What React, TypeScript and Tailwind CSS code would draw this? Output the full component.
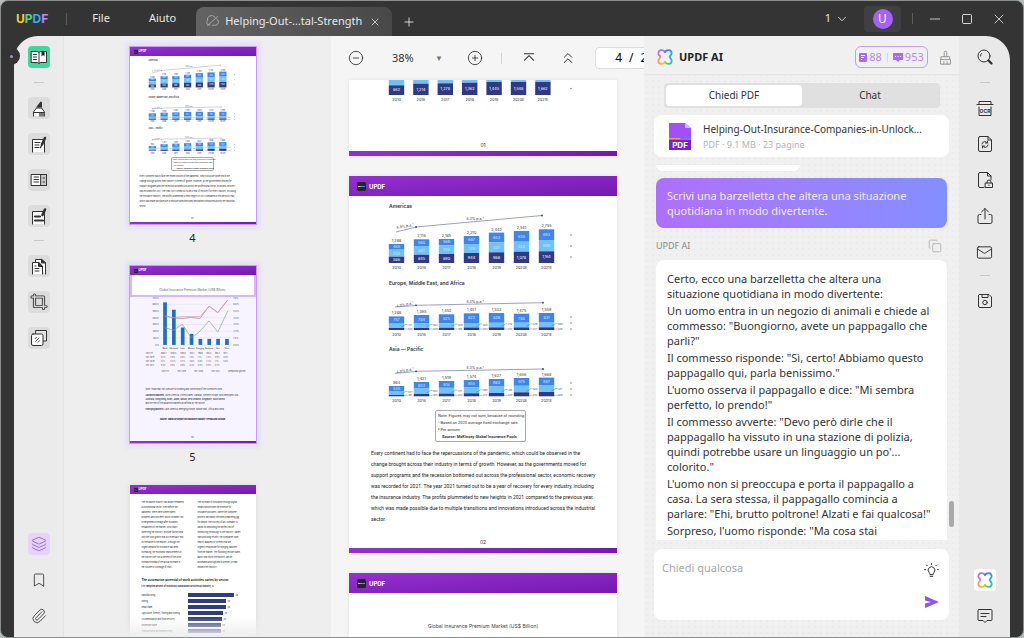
import type { ReactNode } from 'react';
import {
  Bookmark,
  ChevronDown,
  ChevronsUp,
  CircleMinus,
  CirclePlus,
  Copy,
  Layers,
  Mail,
  Minus,
  Paperclip,
  Plus,
  Square,
  X,
} from 'lucide-react';

const years = ['2010', '2016', '2017', '2018', '2019', '2020E', '2021E'];

type Bar = {
  total?: string;
  values: string[];
  heights: number[]; // blue, light, dark
  side?: string[];
};

type ChartProps = {
  height: number;
  base: number;
  step?: number;
  bars: Bar[];
  trend?: number[][];
  legend?: number[];
};

const americas: Bar[] = [
  { total: '1,288', values: ['469', '733', '586'], heights: [5.7, 7, 6.3] },
  { total: '2,116', values: ['580', '691', '845'], heights: [6.7, 8.7, 8.3] },
  { total: '2,185', values: ['569', '726', '890'], heights: [6.3, 8.7, 9] },
  { total: '2,310', values: ['607', '759', '944'], heights: [8, 9, 10] },
  { total: '2,442', values: ['653', '801', '988'], heights: [9.7, 10, 10.7] },
  { total: '2,541', values: ['635', '828', '1,078'], heights: [10.7, 10, 11.3] },
  { total: '2,755', values: ['693', '898', '1,164'], heights: [10.7, 11.3, 11.7] },
];

const europe: Bar[] = [
  { total: '1,288', values: ['757'], heights: [7.3, 4.3, 2], side: ['311', '220'] },
  { total: '1,395', values: ['784'], heights: [8.5, 4.5, 2], side: ['402', '209'] },
  { total: '1,452', values: ['825'], heights: [9, 4.4, 2.3], side: ['429', '198'] },
  { total: '1,451', values: ['822'], heights: [9.7, 4.5, 2.5], side: ['426', '203'] },
  { total: '1,533', values: ['848'], heights: [9.8, 4.6, 2.6], side: ['472', '213'] },
  { total: '1,475', values: ['780'], heights: [9, 4.7, 2.6], side: ['479', '217'] },
  { total: '1,559', values: ['831'], heights: [9.6, 4.7, 2.7], side: ['498', '229'] },
];

const asia: Bar[] = [
  { total: '984', values: ['548'], heights: [5, 4, 1.3], side: ['337', '99'] },
  { total: '1,421', values: ['853'], heights: [6.5, 5.5, 2.3], side: ['383', '185'] },
  { total: '1,519', values: ['916'], heights: [6.8, 5.8, 2.7], side: ['371', '232'] },
  { total: '1,574', values: ['955'], heights: [7.2, 6.1, 3], side: ['395', '214'] },
  { total: '1,627', values: ['980'], heights: [7.5, 6.5, 3.3], side: ['418', '229'] },
  { total: '1,656', values: ['975'], heights: [7.8, 6.5, 4], side: ['429', '254'] },
  { total: '1,668', values: ['967'], heights: [8, 6.4, 4.3], side: ['431', '269'] },
];

const world: Bar[] = ['862', '1,214', '1,278', '1,362', '1,445', '1,548', '1,662'].map((v, i) => ({
  values: ['', '', v],
  heights: [0, 12, [9.7, 11.3, 11.7, 12.3, 13, 13, 13][i]],
}));

const Chart = ({ height, base, step = 25, bars, trend, legend = [] }: ChartProps) => (
  <svg viewBox={`0 0 268 ${height}`} className="block w-full" fontFamily="Inter, sans-serif" textAnchor="middle">
    {trend && (
      <g stroke="#5b5f92" strokeWidth="0.6" fill="#2f3a86">
        <path d={`M${trend[0]}L${trend[1][0] - 1} ${trend[1][1] + 0.3}M${trend[1]}L${trend[2]}`} fill="none" />
        {trend.slice(1).map((p) => (
          <circle key={p[0]} cx={p[0]} cy={p[1]} r="0.9" stroke="none" />
        ))}
        <text x="56" y={trend[1][1] + 0.5} fontSize="3.6" stroke="none" fill="#33374f" transform={`rotate(-9 56 ${trend[1][1]})`}>
          4.3% p.a.¹
        </text>
        <text x="126" y={(trend[1][1] + trend[2][1]) / 2 - 1.5} fontSize="3.6" stroke="none" fill="#33374f">
          4.3% p.a.¹
        </text>
      </g>
    )}
    {bars.map((bar, i) => {
      const cx = 47.5 + i * step;
      const [blue, light, dark] = bar.heights;
      const top = base - blue - light - dark;
      return (
        <g key={i} fontSize="3.8">
          <rect x={cx - 7.7} y={top} width="15.4" height={blue} fill="#3f86ec" />
          <rect x={cx - 7.7} y={top + blue} width="15.4" height={light} fill="#6fc1f8" />
          <rect x={cx - 7.7} y={base - dark} width="15.4" height={dark} fill="#303a84" />
          <text x={cx} y={top - 2} fill="#333">{bar.total}</text>
          <text x={cx} y={top + blue / 2 + 1.3} fill="#dbe9ff">{bar.values[0]}</text>
          <text x={cx} y={base - dark - light / 2 + 1.3} fill="#c9e8ff">{bar.values[1]}</text>
          <text x={cx} y={base - dark / 2 + 1.3} fill="#fff">{bar.values[2]}</text>
          <text x={cx} y={base + 5.8} fill="#333">{years[i]}</text>
          {bar.side && (
            <g fontSize="2.6" fill="#555">
              <path d={`M${cx + 5} ${base - dark - 1}l4-2.5h2M${cx + 7.7} ${base - 1}h3.4`} stroke="#555" strokeWidth="0.4" fill="none" />
              <text x={cx + 13.6} y={base - dark - 2}>{bar.side[0]}</text>
              <text x={cx + 13.6} y={base}>{bar.side[1]}</text>
            </g>
          )}
        </g>
      );
    })}
    {legend.map((y) => (
      <circle key={y} cx="222" cy={y} r="0.8" fill="#777c96" />
    ))}
  </svg>
);

const paragraph = [
  'Every continent had to face the repercussions of the pandemic, which could be observed in the',
  'change brought across their industry in terms of growth. However, as the governments moved for',
  'support programs and the recession bottomed out across the professional sector, economic recovery',
  'was recorded for 2021. The year 2021 turned out to be a year of recovery for every industry, including',
  'the insurance industry. The profits plummeted to new heights in 2021 compared to the previous year,',
  'which was made possible due to multiple transitions and innovations introduced across the industrial',
  'sector.',
];

const PageHeader = ({ small }: { small?: boolean }) => (
  <div
    className={`flex shrink-0 items-center bg-linear-to-br from-[#9430d0] to-[#7719b0] font-bold text-white ${
      small ? 'h-[9px] gap-px px-1 text-[3px]' : 'h-5 gap-[3px] px-2 text-[6px]'
    }`}
  >
    <svg viewBox="0 0 9 9" className={small ? 'size-[4px]' : 'size-[9px]'}>
      <rect width="9" height="9" rx="1.5" fill="#26242b" />
      <path d="M1 4.5h2" stroke="#f3c623" />
      <path d="M3 4.5h2" stroke="#38c98b" />
      <path d="M5 4.5h3" stroke="#4a8cf5" />
    </svg>
    UPDF
  </div>
);

const PageFooter = ({ small, number }: { small?: boolean; number: string }) => (
  <div className="mt-auto shrink-0">
    <div className={`text-center text-[#333] ${small ? 'pb-[2px] text-[2px] leading-[3px]' : 'pb-[2px] text-[5px] leading-[8px]'}`}>
      {number}
    </div>
    <div className={`bg-linear-to-r from-[#9430d0] to-[#7719b0] ${small ? 'h-[2px]' : 'h-[5px]'}`} />
  </div>
);

const RegionPage = ({ small }: { small?: boolean }) => {
  const heading = `font-semibold text-[#333] ${small ? 'h-[6px] pl-[19px] text-[2px] leading-[6px]' : 'h-3 pl-[40px] text-[5px] leading-[14px]'}`;
  return (
    <div className="flex h-full flex-col bg-white font-[Inter,sans-serif]">
      <PageHeader small={small} />
      <h3 className={`${heading} ${small ? 'mt-px' : 'mt-[3px]'}`}>Americas</h3>
      <Chart height={65} base={52} bars={americas} trend={[[47, 21], [67, 16], [193, 4.5]]} legend={[24, 35, 46]} />
      <h3 className={heading}>Europe, Middle East, and Africa</h3>
      <Chart height={54} base={42} bars={europe} trend={[[46, 19], [67, 17.3], [194, 14.7]]} legend={[29, 35, 41]} />
      <h3 className={heading}>Asia — Pacific</h3>
      <Chart height={54} base={42.3} bars={asia} trend={[[46, 19.3], [67, 17.3], [194, 15]]} legend={[29, 35, 41]} />
      <div
        className={`rounded-xs border border-[#aaa] font-[Roboto,sans-serif] text-[#333] ${
          small ? 'mt-px ml-[41px] w-[43px] pl-px text-[2px] leading-[3px]' : 'mt-[2px] ml-[86px] w-[91px] py-px pl-[2px] text-[4px] leading-[7px]'
        }`}
      >
        <p className="whitespace-nowrap">Note: Figures may not sum, because of rounding.</p>
        <p className="whitespace-nowrap">¹ Based on 2020 average fixed exchange rate.</p>
        <p className="whitespace-nowrap">² Per annum.</p>
        <p className="pl-1 font-bold whitespace-nowrap">Source: McKinsey Global Insurance Pools</p>
      </div>
      <div
        className={`whitespace-nowrap text-[#222] ${
          small ? 'mt-[3px] pl-[10px] text-[2px] leading-[5px]' : 'mt-[6px] pl-[22px] font-[Roboto,sans-serif] text-[5px] leading-[11px]'
        }`}
      >
        {paragraph.map((line) => (
          <p key={line}>{line}</p>
        ))}
      </div>
      <PageFooter small={small} number="02" />
    </div>
  );
};

const marketRows = [
  ['2021 PY', '1084.1', '1010.4', '500.6', '310.2', '190.6', '180.4', '186.2', '187.1'],
  ['YoY 2019', '3.2%', '2.5%', '3.0%', '1.4%', '1.1%', '2.3%', '3.9%', '4.8%'],
  ['YoY 2020', '2.1%', '3.4%', '3.2%', '2.6%', '3.8%', '2.2%', '1.1%', '4.5%'],
  ['YoY 2021', '3.3%', '3.5%', '3.0%', '4.4%', '3.5%', '5.3%', '4.7%', ''],
];

const MarketChart = () => (
  <svg viewBox="0 0 376 160" className="block w-full" fontFamily="Inter, sans-serif" fontSize="7" fill="#555">
    {[2, 22, 42, 62, 82, 102, 122, 143].map((y, i) => (
      <g key={y}>
        <path d={`M92 ${y}H302`} stroke="#d8d5df" />
        <text x="86" y={y + 3} textAnchor="end">{700 - i * 100}.0</text>
        <text x="308" y={y + 3}>{7 - i}.0%</text>
      </g>
    ))}
    {[127, 105, 52, 33, 18, 18, 18, 18].map((h, i) => (
      <rect key={i} x={99 + i * 26.4} y={143 - h} width="11" height={h} fill="#1d6fc0" />
    ))}
    <g fill="none" strokeWidth="2">
      <path d="M104 55l26 8 26 1 27-3 26 3 27-37 26 20 30-39" stroke="#c5707f" />
      <path d="M104 59l26 2 26-2 27-1 26 0 27-30 26 18 30-37" stroke="#c3a0ab" />
      <path d="M104 92l26 7 26-18 27 41 26-20 27-31 26 34 30-64" stroke="#79ac85" />
    </g>
    <g fontSize="5" fontWeight="700" textAnchor="middle">
      {['World', 'Advanced', 'Latin', 'Western', 'Emerging', 'Southeast', 'Asia', 'China'].map((name, i) => (
        <text key={name} x={104 + i * 26.4} y="154">{name}</text>
      ))}
    </g>
  </svg>
);

const MarketThumb = () => (
  <div className="flex h-full flex-col bg-[#f7f3ff] font-[Inter,sans-serif]">
    <PageHeader small />
    <h3 className="h-[22px] border-2 border-t-0 border-[#d6b9fa] bg-white pt-[13px] text-center text-[3px] leading-[4px] text-[#666]">
      Global Insurance Premium Market (US$ Billion)
    </h3>
    <MarketChart />
    <table className="ml-[16px] w-[86px] text-[2px] leading-[4px] text-[#444]">
      <tbody>
        {marketRows.map((row) => (
          <tr key={row[0]}>
            {row.map((cell, i) => (
              <td key={i} className="whitespace-nowrap">{cell}</td>
            ))}
          </tr>
        ))}
      </tbody>
    </table>
    <div className="mt-[2px] flex justify-between pr-[10px] pl-[32px] text-[2px] leading-[4px] text-[#444]">
      <span>2021 PY</span>
      <span>YoY 2019</span>
      <span>YoY 2020</span>
      <span>YoY 2021</span>
      <span>Compound growth</span>
    </div>
    <div className="mt-[14px] flex flex-col pl-[16px] text-[2px] leading-[4px] whitespace-nowrap text-[#333]">
      <p>Note: Totals may not sum due to rounding and conversion of the currencies used.</p>
      <p className="mt-[2px]"><b>Advanced Markets:</b> North America (United States, Canada), Western Europe, and Developed Asia</p>
      <p className="font-semibold">Australia, Hong Kong, Israel, Japan, Macao, New Zealand, Singapore, South Korea</p>
      <p>and the rest of the advanced markets as defined by the source.</p>
      <p className="mt-[2px]"><b>Emerging Markets:</b> Latin America, Emerging Europe, Middle East, Africa and China</p>
    </div>
    <p className="mt-[6px] text-center text-[2px] leading-[4px] font-bold">Source: Swiss Re Report on Insurance Industry Trends and Outlook</p>
    <PageFooter small number="03" />
  </div>
);

const leftColumn = [
  'The insurance industry has always remained',
  'a conventional sector. Even before the',
  'pandemic, there were some evident',
  'problems and concerns which ultimately led',
  'to heightened leverage after economic',
  'instabilities hit the market. Structurally',
  'observing the industry, multiple factors deal',
  'with the slow growth that will eventually end',
  'its relevance in the market. Although the',
  'urgent demand for insurance has been',
  'increasing, the economic improvements in',
  'the industry are just a percent of the price',
  'increase instead of the actual increase in',
  'the volume or coverage of risks.',
];
const rightColumn = [
  'The increase of innovation through digital',
  'means has become the essence for',
  'insurance providers. Where the complete',
  'process has mainly become a marketing gig',
  'for people, the success of any company is',
  'based on depositing the perfect mix of',
  'introducing technology in the industry. Rather',
  'than providing returns, the companies have',
  'heavily adapted to systems that are',
  'urgently responsible for bringing liabilities',
  'from the market. The following section states',
  'about how much the industry can be',
  'automated and digitized in present or near',
  'modern the industry.',
];
const sectors: [string, number][] = [
  ['Manufacturing', 46],
  ['Mining', 38],
  ['Retail trade', 38],
  ['Agriculture, forestry, fishing and hunting', 35],
  ['Accommodation and food services', 34],
  ['Wholesale trade', 33],
  ['Transportation and warehousing', 33],
];

const SectorThumb = () => (
  <div className="flex h-full flex-col bg-white font-[Inter,sans-serif] text-[#222]">
    <PageHeader small />
    <div className="mt-[6px] grid grid-cols-2 gap-[6px] pr-[8px] pl-[12px] text-[2px] leading-[5px] whitespace-nowrap">
      {[leftColumn, rightColumn].map((column, i) => (
        <div key={i}>
          {column.map((line) => (
            <p key={line}>{line}</p>
          ))}
        </div>
      ))}
    </div>
    <div className="mt-[7px] pl-[12px] text-[3px] leading-[6px] font-bold whitespace-nowrap">
      <p>The automation potential of work activities varies by sector.</p>
      <p className="text-[2px]">FTE-weighted percent of technically automatable activities by industry, %</p>
    </div>
    <div className="mt-[3px] pl-[12px] text-[2px] leading-[6px]">
      {sectors.map(([name, value]) => (
        <div key={name} className="flex items-center gap-[2px] whitespace-nowrap">
          <span className="w-[44px]">{name}</span>
          <span className="h-[4px] bg-[#2f3c7e]" style={{ width: value }} />
          <span>{value}</span>
        </div>
      ))}
    </div>
  </div>
);

const Thumb = ({ label, children, active }: { label?: string; children: ReactNode; active?: boolean }) => (
  <button className="block w-[126px] shrink-0 text-left">
    <div
      className={`h-[177px] overflow-hidden ${
        active ? 'shadow-[0_0_0_1px_#c79df3,0_0_4px_5px_#e7e0f8]' : 'shadow-[0_0_6px_#d9d9d9]'
      }`}
    >
      {children}
    </div>
    {label && <div className="mt-[5px] h-[37px] text-center text-[11px] leading-[17px] text-[#222]">{label}</div>}
  </button>
);

const Clover = ({ className = '' }: { className?: string }) => (
  <svg viewBox="0 0 24 24" className={className} fill="none" strokeWidth="2.6" strokeLinecap="round">
    <defs>
      <linearGradient id="cl-a" x1="0" y1="1" x2="1" y2="0"><stop stopColor="#e05cf5" /><stop offset="1" stopColor="#7b8dff" /></linearGradient>
      <linearGradient id="cl-b" x1="0" y1="0" x2="1" y2="1"><stop stopColor="#3f7dfb" /><stop offset="1" stopColor="#23aee8" /></linearGradient>
      <linearGradient id="cl-c" x1="1" y1="0" x2="0" y2="1"><stop stopColor="#16b7d0" /><stop offset="1" stopColor="#3fd97b" /></linearGradient>
      <linearGradient id="cl-d" x1="0" y1="0" x2="1" y2="1"><stop stopColor="#ff8d6f" /><stop offset="1" stopColor="#ffc412" /></linearGradient>
    </defs>
    <path d="M12 4.500C10 .5 2 0 2 6.500c0 3.500 3 3 3 5.500" stroke="url(#cl-a)" />
    <path d="M12 4.500C14 .5 22 0 22 6.500c0 3.500-3 3-3 5.500" stroke="url(#cl-b)" />
    <path d="M12 19.500c2 4 10 4.500 10-2 0-3.500-3-3-3-5.500" stroke="url(#cl-c)" />
    <path d="M12 19.500c-2 4-10 4.500-10-2 0-3.500 3-3 3-5.500" stroke="url(#cl-d)" />
  </svg>
);

const Drawing = ({ children, className = 'size-[18px]' }: { children: ReactNode; className?: string }) => (
  <svg viewBox="0 0 18 18" className={className} fill="none" stroke="#333" strokeWidth="1" strokeLinejoin="round" strokeLinecap="round">
    {children}
  </svg>
);

const Tool = ({ label, children, tone = 'bg-[#dcdcdc]' }: { label: string; children: ReactNode; tone?: string }) => (
  <button aria-label={label} className={`flex size-[22px] shrink-0 items-center justify-center rounded-sm ${tone}`}>
    {children}
  </button>
);

const Rule = () => <div className="h-px w-[10px] shrink-0 bg-[#c8c8c8]" />;

const TitleBar = () => (
  <header className="flex h-[35px] shrink-0 items-center text-[11px] text-[#e8e8e8]">
    <div className="ml-[15px] font-[Inter,sans-serif] text-[12px] font-bold">
      <span className="text-[#ffcf1f]">U</span>
      <span className="text-[#4fd67c]">P</span>
      <span className="text-[#3fa4f5]">D</span>
      <span className="text-[#c486f2]">F</span>
    </div>
    <div className="ml-[18px] h-[12px] w-px bg-[#5d5d5d]" />
    <button className="ml-[25px]">File</button>
    <button className="ml-[39px]">Aiuto</button>
    <div className="ml-[20px] flex h-[29px] w-[196px] items-center self-end rounded-t-lg bg-linear-to-r from-[#636363] to-[#484848] pl-[9px]">
      <Drawing className="size-[15px]">
        <path d="M3 14 15 3M6 13H4a3 3 0 0 1-1-5 5 5 0 0 1 9-4M14 6a4 4 0 0 1-1 7.500H9" stroke="#b5b5b5" />
      </Drawing>
      <span className="ml-[5px] flex-1 text-[11px] whitespace-nowrap">Helping-Out-...tal-Strength</span>
      <button aria-label="Chiudi scheda" className="mr-[11px]"><X size={12} strokeWidth={1.500} /></button>
    </div>
    <button aria-label="Nuova scheda" className="mt-[6px] ml-[10px]"><Plus size={14} strokeWidth={1.500} /></button>
    <button className="ml-auto flex items-center gap-1 text-[11px]">1 <ChevronDown size={14} strokeWidth={1.500} /></button>
    <button aria-label="Account" className="ml-[15px] flex h-[26px] w-[37px] items-center justify-center rounded-sm bg-[#403f42]">
      <span className="flex size-5 items-center justify-center rounded-full bg-[#a462f8] text-[12px] text-white">U</span>
    </button>
    <div className="ml-[11px] h-[11px] w-px bg-[#5d5d5d]" />
    <button aria-label="Riduci" className="ml-[14px]"><Minus size={16} strokeWidth={1.200} /></button>
    <button aria-label="Ingrandisci" className="ml-[18px]"><Square size={12} strokeWidth={1.800} /></button>
    <button aria-label="Chiudi" className="mr-[16px] ml-[18px]"><X size={16} strokeWidth={1.200} /></button>
  </header>
);

const LeftRail = () => (
  <nav className="relative flex w-[50px] shrink-0 flex-col items-center rounded-tl-3xl border-r border-[#e3e3e3] bg-[#ebebeb] py-[10px]">
    <span className="absolute top-[11px] -left-[12px] flex size-[18px] items-center justify-center rounded-full bg-[#343434]">
      <span className="size-[3px] rounded-full bg-[#b08ad8]" />
    </span>
    <Tool label="Lettore" tone="bg-[#3fd79b]">
      <Drawing>
        <path d="M1.500 3.500h6L9 4.500l1.500-1h6v11h-6l-1.500 1-1.500-1h-6z" fill="#fff" />
        <path d="M9 5v10M3.500 6.500h3M3.500 9h3M3.500 11.500h3" />
        <path d="M11.500 3h3v5.500L13 7l-1.500 1.500z" fill="#222" stroke="none" />
      </Drawing>
    </Tool>
    <div className="mt-[14px]"><Rule /></div>
    <div className="mt-[14px] flex flex-col gap-[14px]">
      <Tool label="Commenta">
        <Drawing>
          <path d="M3.500 17v-4l3-4h5l3 4v4" fill="#fff" />
          <path d="m6 8.500 4.500-6 1.500.8v5.200z" fill="#333" stroke="none" />
          <path d="M9 13.500h5.500v4H9z" fill="#777" stroke="none" />
          <path d="M3.500 13.500h11" />
        </Drawing>
      </Tool>
      <Tool label="Modifica PDF">
        <Drawing>
          <path d="M2.500 17V4.500h12V17" fill="#fff" />
          <path d="M5 7.500h5M5 10h4M5 12.500h4" />
          <path d="m15 3-3 6.500" strokeWidth="2.600" />
          <path d="m11.500 10.500-1 2" strokeWidth="1.400" />
        </Drawing>
      </Tool>
      <Tool label="Prepara modulo">
        <Drawing>
          <path d="M1.500 3.500h15v11h-15z" fill="#fff" />
          <path d="M11 3.500h5.500v11H11z" fill="#c9c9c9" />
          <path d="M4 6h4.500M4 8.500h4.500M4 11h4.500M13 7h1.500M13 11h1.500" />
        </Drawing>
      </Tool>
      <Tool label="Oscura">
        <Drawing>
          <path d="M2.500 17V4.500h12V17" fill="#fff" />
          <path d="M5 9.500h5M5 13.500h8" strokeWidth="2.200" />
          <path d="m15 2.500-2.500 5.500" strokeWidth="2.600" />
        </Drawing>
      </Tool>
    </div>
    <div className="mt-[13px]"><Rule /></div>
    <div className="mt-[14px] flex flex-col gap-[14px]">
      <Tool label="Organizza pagine">
        <Drawing>
          <path d="M5.500 5V2.500h6l4 3.500v11" fill="#fff" />
          <path d="M2.500 17V5.500h6l4 4V17" fill="#fff" />
          <path d="M8.500 5.500v4h4zM11.500 2.500V6h4z" fill="#333" />
          <path d="M5 9h1M5 11.500h4M5 14h4" />
        </Drawing>
      </Tool>
      <Tool label="Ritaglia">
        <Drawing>
          <path d="M2 4h11.500v11.500M4.500 2v11.500H16" strokeWidth="3.200" />
          <path d="M2 4h11.500v11.500M4.500 2v11.500H16" stroke="#d5d5d5" strokeWidth="1.400" />
        </Drawing>
      </Tool>
      <Tool label="Filigrana">
        <Drawing>
          <path d="M6 1.500h10.500V12H6z" fill="#e4e4e4" />
          <rect x="1.500" y="5" width="11.500" height="11.500" rx="1.500" fill="#fff" />
          <path d="m5 9.800 1.500-1.500M5.500 12.500 9 9M8 13.200l1.500-1.500" strokeWidth="0.9" />
        </Drawing>
      </Tool>
    </div>
    <div className="mt-auto flex flex-col gap-[14px]">
      <Tool label="Livelli" tone="bg-[#e6d3fb]"><Layers size={16} strokeWidth={1.300} color="#8e5bd0" /></Tool>
      <Tool label="Segnalibri" tone=""><Bookmark size={16} strokeWidth={1.400} color="#444" /></Tool>
      <Tool label="Allegati" tone=""><Paperclip size={16} strokeWidth={1.400} color="#444" /></Tool>
    </div>
  </nav>
);

const Viewer = () => (
  <main className="flex min-w-0 flex-1 flex-col overflow-hidden bg-[#f5f5f5]">
    <div className="flex h-11 shrink-0 items-center pl-[16px] text-[#333]">
      <button aria-label="Riduci zoom" className="shrink-0"><CircleMinus size={16} strokeWidth={1.300} /></button>
      <span className="ml-[28px] w-[32px] shrink-0 text-[11px]">38%</span>
      <button aria-label="Livello di zoom" className="ml-[11px] w-[8px] shrink-0 text-center text-[8px] text-[#777]">▼</button>
      <button aria-label="Aumenta zoom" className="ml-[24px] shrink-0"><CirclePlus size={16} strokeWidth={1.300} /></button>
      <div className="ml-[18px] h-[11px] w-px shrink-0 bg-[#d5d5d5]" />
      <button aria-label="Prima pagina" className="ml-[20px] shrink-0">
        <Drawing className="size-[14px]"><path d="M3 3.500h12M3 12l6-6 6 6" strokeWidth="1.300" /></Drawing>
      </button>
      <button aria-label="Pagina precedente" className="ml-[23px] shrink-0"><ChevronsUp size={18} strokeWidth={1.300} /></button>
      <div className="ml-[18px] flex h-[22px] w-[70px] shrink-0 items-center gap-[7px] rounded-sm border border-[#dcdcdc] bg-white text-[12px] text-black">
        <input aria-label="Pagina" defaultValue="4" className="w-[26px] bg-transparent text-right outline-none" />
        <span className="flex gap-[7px] whitespace-nowrap"><span>/</span><span>23</span></span>
      </div>
    </div>
    <div className="mx-auto flex min-h-0 w-[268px] flex-1 -translate-x-[5px] flex-col gap-5 font-[Inter,sans-serif]">
      <section className="flex h-[76px] shrink-0 flex-col overflow-hidden bg-white shadow-[0_0_4px_#e2e2e2]">
        <Chart height={24} base={15} step={24.4} bars={world} legend={[8.500]} />
        <PageFooter number="01" />
      </section>
      <section className="h-[377px] shrink-0 shadow-[0_0_4px_#e2e2e2]">
        <RegionPage />
      </section>
      <section className="h-[377px] shrink-0 bg-white shadow-[0_0_4px_#e2e2e2]">
        <PageHeader />
        <h3 className="mt-[29px] text-center text-[5px] leading-[8px] text-[#444]">Global Insurance Premium Market (US$ Billion)</h3>
      </section>
    </div>
  </main>
);

const answer = [
  ['Certo, ecco una barzelletta che altera una', 'situazione quotidiana in modo divertente:'],
  ['Un uomo entra in un negozio di animali e chiede al', 'commesso: "Buongiorno, avete un pappagallo che', 'parli?"'],
  ['Il commesso risponde: "Sì, certo! Abbiamo questo', 'pappagallo qui, parla benissimo."'],
  ['L\'uomo osserva il pappagallo e dice: "Mi sembra', 'perfetto, lo prendo!"'],
  ['Il commesso avverte: "Devo però dirle che il', 'pappagallo ha vissuto in una stazione di polizia,', "quindi potrebbe usare un linguaggio un po'...", 'colorito."'],
  ["L'uomo non si preoccupa e porta il pappagallo a", 'casa. La sera stessa, il pappagallo comincia a', 'parlare: "Ehi, brutto poltrone! Alzati e fai qualcosa!"'],
  ['Sorpreso, l\'uomo risponde: "Ma cosa stai'],
];

const AiPanel = () => (
  <aside className="flex w-[315px] shrink-0 flex-col bg-[#f0f0f0] bg-[radial-gradient(#ebebeb_1px,transparent_1px)] bg-[size:6px_6px] text-[#333]">
    <div className="flex h-[39px] shrink-0 items-center border-b border-[#e5e5e5] bg-[#f0f0f0] pt-[4px] pr-[6px] pl-[13px]">
      <Clover className="size-4" />
      <h2 className="ml-[6px] text-[11px] font-bold text-[#222]">UPDF AI</h2>
      <div className="ml-auto flex h-[22px] w-[73px] items-center justify-center gap-[2px] rounded-md border border-[#c29cf5] text-[11px] text-[#b48af0]">
        <svg viewBox="0 0 8 9" className="h-[9px] w-[8px]"><rect width="8" height="9" rx="1" fill="#a56bf5" /><path d="M2 2.500h4M2 4.500h3M2 6.500h1" stroke="#fff" /></svg>
        <span>88</span>
        <span className="mx-[3px] h-[9px] w-px bg-[#dccbf5]" />
        <svg viewBox="0 0 10 9" className="h-[9px] w-[10px]"><path d="M0 0h10v7H7L5 9 3 7H0z" fill="#a56bf5" /><path d="M2 3.500h1M4.500 3.500h1M7 3.500h1" stroke="#fff" /></svg>
        <span>953</span>
      </div>
      <button aria-label="Pulisci" className="ml-[10px]">
        <Drawing className="size-[15px]"><path d="M7.500 8V3a1.500 1.500 0 0 1 3 0v5M4 8h10v3.500H4zM3 11.500V17h12v-5.500M7 17v-3M11 17v-3" stroke="#888" /></Drawing>
      </button>
    </div>
    <div className="mt-[8px] mr-[19px] ml-[20px] grid h-[25px] shrink-0 grid-cols-2 rounded-sm bg-[#e0e0e0] p-[2px] text-[10px]">
      <button className="rounded-sm bg-white">Chiedi PDF</button>
      <button>Chat</button>
    </div>
    <div className="mt-[7px] mr-[10px] ml-[10px] flex h-[42px] shrink-0 items-center rounded-lg bg-white pl-[15px]">
      <svg viewBox="0 0 22 27" className="h-[27px] w-[22px] shrink-0">
        <path d="M0 0h16l6 5v10H0z" fill="#a250f5" />
        <path d="M16 0v5h6z" fill="#d5b4fa" />
        <path d="M0 17h22v10H0z" fill="#7c1fd0" />
        <path d="M0 15h22v2H0z" fill="#8b6cf0" />
        <path d="M0 15h11v1H0z" fill="#e3a64a" />
        <text x="11" y="25" fontSize="8" fontWeight="700" fill="#fff" textAnchor="middle" fontFamily="Inter, sans-serif">PDF</text>
      </svg>
      <div className="ml-[12px] whitespace-nowrap">
        <p className="text-[10px] leading-[16px]">Helping-Out-Insurance-Companies-in-Unlock...</p>
        <p className="text-[9px] leading-[15px] text-[#b5b5b5]">PDF · 9.1 MB · 23 pagine</p>
      </div>
    </div>
    <div className="mt-[8px] ml-[12px] h-[6px] w-[144px] shrink-0 rounded-b-lg bg-white" />
    <div className="relative min-h-0 flex-1 overflow-hidden pt-[7px] pr-[12px] pl-[12px]">
      <div className="rounded-lg bg-linear-to-r from-[#ae70fc] to-[#838fff] px-[11px] py-[10px] text-[11px] leading-[15px] whitespace-nowrap text-[#f3ebff]">
        <p>Scrivi una barzelletta che altera una situazione</p>
        <p>quotidiana in modo divertente.</p>
      </div>
      <div className="flex h-[32px] items-center justify-between pt-[3px] pr-[5px] text-[9px] text-[#888]">
        <span>UPDF AI</span>
        <button aria-label="Copia"><Copy size={14} strokeWidth={1.600} color="#b5b5b5" /></button>
      </div>
      <div className="flex h-[340px] flex-col gap-[2px] rounded-lg bg-white px-[11px] pt-[11px] text-[11px] leading-[15px] whitespace-nowrap">
        {answer.map((lines) => (
          <p key={lines[0]}>
            {lines.map((line) => (
              <span key={line} className="block">{line}</span>
            ))}
          </p>
        ))}
      </div>
      <div className="absolute right-[5px] bottom-[13px] h-[26px] w-[5px] rounded-full bg-[#a9a9a9]" />
    </div>
    <form className="mx-[10px] mt-[9px] mb-[17px] flex h-[71px] shrink-0 rounded-lg bg-white py-[10px] pr-[10px] pl-[8px]">
      <textarea aria-label="Messaggio" placeholder="Chiedi qualcosa" className="flex-1 resize-none text-[11px] leading-[18px] outline-none placeholder:text-[#a8a8a8]" />
      <div className="flex flex-col items-center justify-between pt-[4px] pb-[2px]">
        <button type="button" aria-label="Suggerimenti" className="flex">
          <Drawing className="size-[15px]">
            <path d="M7 13.500q0-1.500-1-2.300a4 4 0 1 1 6 0q-1 .8-1 2.300zM7.500 16h3M9 .8v1M3 2.500l.8.8M15 2.500l-.8.8M.8 8h1M16.200 8h1" strokeWidth="1.200" />
          </Drawing>
        </button>
        <button aria-label="Invia" className="flex">
          <svg viewBox="0 0 14 12" className="h-[12px] w-[14px]"><path d="M0 0l14 6L0 12V7.500L6 6 0 4.500z" fill="#9055f0" /></svg>
        </button>
      </div>
    </form>
  </aside>
);

const RightRail = () => (
  <nav className="flex w-[51px] shrink-0 flex-col items-center rounded-tr-3xl bg-[#e9e9e9] py-[10px]">
    <Tool label="Cerca" tone="">
      <Drawing><circle cx="8" cy="8" r="6" /><path d="M4.500 8a3.500 3.500 0 0 1 1-2.500" /><path d="m12.500 12.500 3 3" strokeWidth="2.400" /></Drawing>
    </Tool>
    <div className="mt-[14px]"><Rule /></div>
    <div className="mt-[14px] flex flex-col gap-[14px]">
      <Tool label="OCR" tone="">
        <Drawing>
          <path d="M3 5V2.500h12V5M1 5.500h16M3 8v8.500h12V8" />
          <text x="9" y="13.500" fontSize="5" fontWeight="700" fill="#333" stroke="none" textAnchor="middle" fontFamily="Inter, sans-serif">OCR</text>
        </Drawing>
      </Tool>
      <Tool label="Converti" tone="">
        <Drawing><path d="M4 1.500h8l3.500 3.500v10q0 1.500-1.500 1.500H4q-1.500 0-1.500-1.500V3Q2.500 1.500 4 1.500zM12 1.500V5h3.500M6 9a3 3 0 0 1 5.500-1M12 10a3 3 0 0 1-5.500 1M11.500 6v2h-2M6.500 13v-2h2" /></Drawing>
      </Tool>
      <Tool label="Proteggi" tone="">
        <Drawing><path d="M8 16.500H4Q2.500 16.500 2.500 15V3Q2.500 1.500 4 1.500h7.500L15 5v3.500M11.500 1.500V5H15M9.500 12h7v4.500h-7zM11 12v-1a2 2 0 0 1 4 0v1M13 14v.5" /></Drawing>
      </Tool>
      <Tool label="Condividi" tone="">
        <Drawing><path d="M5 7.500H3.500Q2 7.500 2 9v6q0 1.500 1.500 1.500h11Q16 16.500 16 15V9q0-1.500-1.500-1.500H13M9 12V1.500M5.500 5 9 1.500 12.500 5" /></Drawing>
      </Tool>
      <Tool label="Invia per email" tone="">
        <Mail size={17} strokeWidth={1.400} color="#333" />
      </Tool>
    </div>
    <div className="mt-[12px]"><Rule /></div>
    <div className="mt-[14px]">
      <Tool label="Salva" tone="">
        <Drawing><path d="M3.500 2.500h9.500l2.500 2.500v9q0 1.500-1.500 1.500H4Q2.500 15.500 2.500 14V3.500zM6 2.500v3h6v-3" /><circle cx="9" cy="10.500" r="2.200" /></Drawing>
      </Tool>
    </div>
    <div className="mt-auto flex flex-col gap-[14px]">
      <Tool label="UPDF AI" tone="bg-white"><Clover className="size-4" /></Tool>
      <Tool label="Commenti" tone="">
        <Drawing><path d="M3 2.500h12q1 0 1 1v9q0 1-1 1h-4L9 15.500 7 13.500H3q-1 0-1-1v-9q0-1 1-1zM5 6.500h8M5 9.500h5" /></Drawing>
      </Tool>
    </div>
  </nav>
);

export default function App() {
  return (
    <div className="h-screen bg-[#b9bdb9]">
      <div className="flex h-full flex-col overflow-hidden rounded-lg border border-[#8c908c] bg-[#343434] font-['Noto_Sans','Open_Sans',sans-serif]">
        <TitleBar />
        <div className="mx-[13px] flex min-h-0 flex-1">
          <LeftRail />
          <div className="relative flex w-[268px] shrink-0 flex-col items-center overflow-hidden border-r border-[#f5f5f5] bg-[#eeeeee] pt-[11px] pr-[10px]">
            <Thumb label="4" active><RegionPage small /></Thumb>
            <Thumb label="5" active><MarketThumb /></Thumb>
            <Thumb><SectorThumb /></Thumb>
            <div className="absolute inset-x-0 bottom-0 h-[20px] bg-linear-to-t from-[#eeeeee] to-transparent" />
          </div>
          <Viewer />
          <AiPanel />
          <RightRail />
        </div>
      </div>
    </div>
  );
}
